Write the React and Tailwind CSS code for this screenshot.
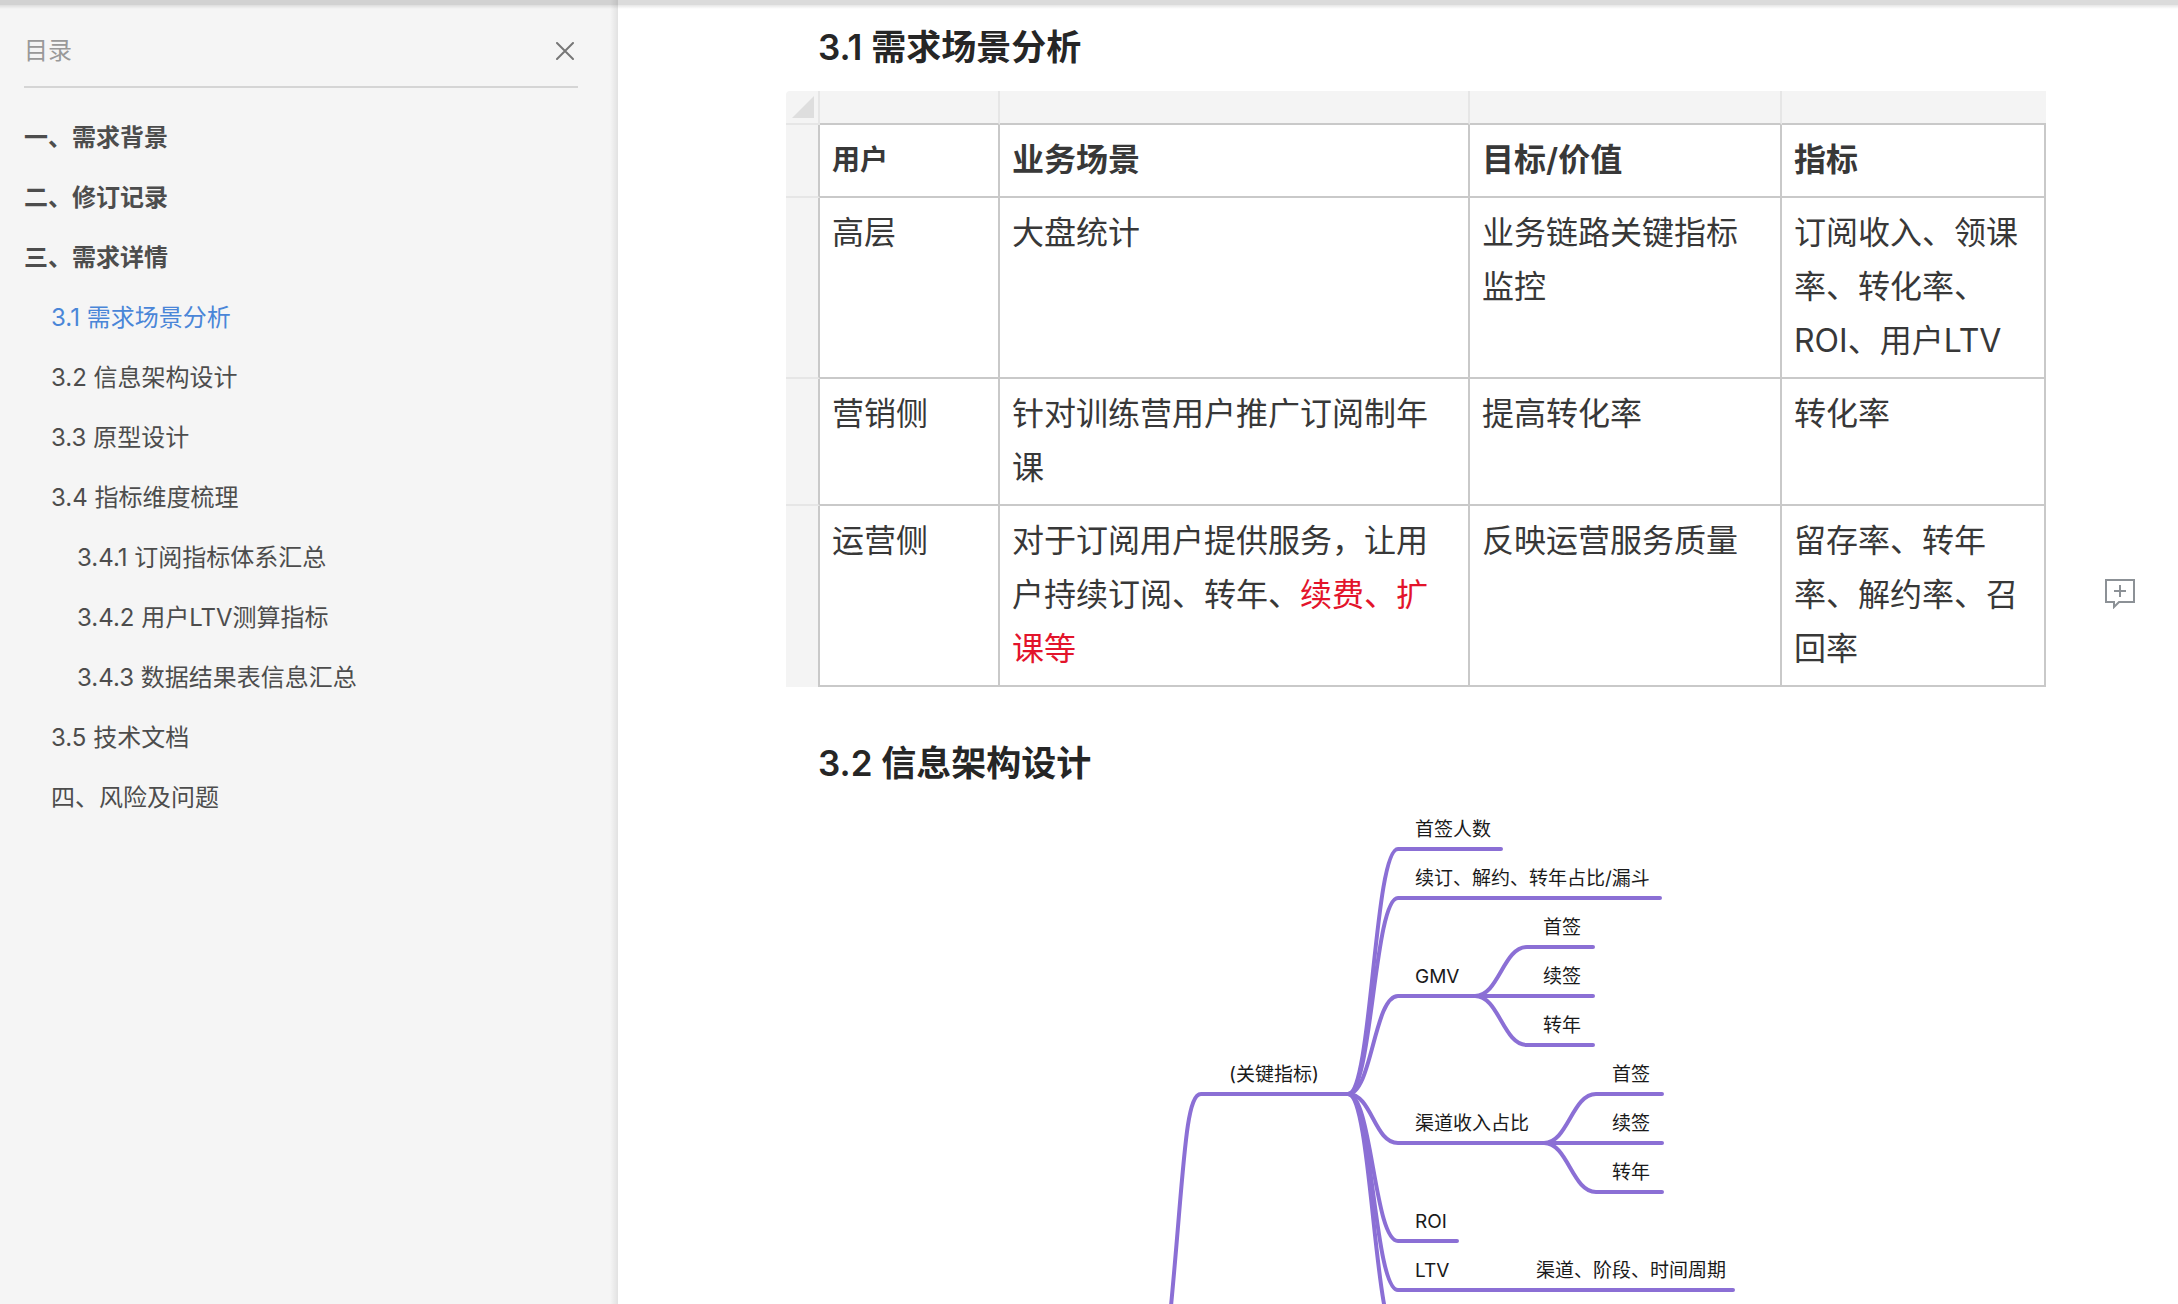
import React from "react";

const outline = [
  { label: "一、需求背景", level: 1 },
  { label: "二、修订记录", level: 1 },
  { label: "三、需求详情", level: 1 },
  { label: "3.1 需求场景分析", level: 2, active: true },
  { label: "3.2 信息架构设计", level: 2 },
  { label: "3.3 原型设计", level: 2 },
  { label: "3.4 指标维度梳理", level: 2 },
  { label: "3.4.1 订阅指标体系汇总", level: 3 },
  { label: "3.4.2 用户LTV测算指标", level: 3 },
  { label: "3.4.3 数据结果表信息汇总", level: 3 },
  { label: "3.5 技术文档", level: 2 },
  { label: "四、风险及问题", level: 2 },
];

const levelClass = {
  1: "font-semibold",
  2: "pl-[27px]",
  3: "pl-[53px]",
};

const rows = [
  ["高层", "大盘统计", "业务链路关键指标监控", "订阅收入、领课率、转化率、ROI、用户LTV"],
  ["营销侧", "针对训练营用户推广订阅制年课", "提高转化率", "转化率"],
  [
    "运营侧",
    <>
      对于订阅用户提供服务，让用户持续订阅、转年、<span className="text-[#e3142b]">续费、扩课等</span>
    </>,
    "反映运营服务质量",
    "留存率、转年率、解约率、召回率",
  ],
];

function Sidebar() {
  return (
    <aside className="flex w-[618px] shrink-0 bg-[#f5f5f5] text-2xl text-[#4d4d4d]">
      <div className="min-w-0 flex-1 pl-6 pr-8 pt-4">
        <header className="flex h-[72px] items-center justify-between border-b-2 border-[#d5d5d5] text-[#999]">
          <h2>目录</h2>
          <button type="button" aria-label="关闭目录" className="p-1 text-[#777]">
            <svg width="18" height="18" viewBox="0 0 18 18" fill="none" stroke="currentColor" strokeWidth="2" strokeLinecap="round">
              <path d="M1 1 17 17M17 1 1 17" />
            </svg>
          </button>
        </header>
        <nav aria-label="目录" className="pt-5">
          <ul>
            {outline.map((item) => (
              <li key={item.label} className={levelClass[item.level]}>
                <a href="#" className={item.active ? "block leading-[60px] text-[#4a86d8]" : "block leading-[60px]"}>
                  {item.label}
                </a>
              </li>
            ))}
          </ul>
        </nav>
      </div>
      <div className="w-2 bg-linear-to-r from-transparent to-black/8" />
    </aside>
  );
}

const cell = "border-b-2 border-r-2 border-[#c9c9c9] px-3 pb-[9px] pt-2 text-left align-top";
const rail = "border-b-2 border-r-2 border-b-[#e6e6e6] border-r-[#c9c9c9] bg-[#f4f4f4] p-0";
const strip = "border-b-2 border-b-[#c9c9c9] bg-[#f4f4f4] p-0";

function ScenarioTable() {
  return (
    <table className="w-full table-fixed border-separate border-spacing-0 text-[32px] leading-[54px] text-[#383838]">
      <colgroup>
        <col className="w-[34px]" />
        <col className="w-[180px]" />
        <col />
        <col className="w-[312px]" />
        <col className="w-[264px]" />
      </colgroup>
      <thead>
        <tr className="h-[34px]">
          <td className="rounded-tl border-b-2 border-r-2 border-[#e6e6e6] bg-[#f4f4f4] p-0">
            <svg className="ml-1.5 block" width="22" height="22" viewBox="0 0 22 22">
              <path d="M22 0V22H0Z" fill="#dedede" />
            </svg>
          </td>
          <td className={`${strip} border-r-2 border-r-[#e6e6e6]`} />
          <td className={`${strip} border-r-2 border-r-[#e6e6e6]`} />
          <td className={`${strip} border-r-2 border-r-[#e6e6e6]`} />
          <td className={strip} />
        </tr>
        <tr>
          <td className={rail} />
          <th scope="col" className={`${cell} text-[28px] font-semibold`}>用户</th>
          <th scope="col" className={`${cell} font-semibold`}>业务场景</th>
          <th scope="col" className={`${cell} font-semibold`}>目标/价值</th>
          <th scope="col" className={`${cell} font-semibold`}>指标</th>
        </tr>
      </thead>
      <tbody>
        {rows.map((r, i) => (
          <tr key={r[0]}>
            <td className={i === rows.length - 1 ? "border-r-2 border-[#c9c9c9] bg-[#f4f4f4] p-0" : rail} />
            {r.map((c, j) => (
              <td key={j} className={cell}>{c}</td>
            ))}
          </tr>
        ))}
      </tbody>
    </table>
  );
}

const branches = [
  { label: "首签人数", y: 62, end: 715 },
  { label: "续订、解约、转年占比/漏斗", y: 111, end: 874 },
  { label: "GMV", y: 209, end: 689, children: ["首签", "续签", "转年"] },
  { label: "渠道收入占比", y: 356, end: 758, children: ["首签", "续签", "转年"] },
  { label: "ROI", y: 454, end: 671 },
  { label: "LTV", y: 503, end: 947, note: { x: 750, label: "渠道、阶段、时间周期" } },
  { label: "", y: 552, end: 700 },
];

const curve = (x1, y1, x2, y2) =>
  `M${x1} ${y1}C${x1 + 24} ${y1} ${x2 - 24} ${y2} ${x2} ${y2}`;

function MindMap() {
  return (
    <svg
      role="img"
      aria-label="信息架构思维导图"
      className="block shrink-0 text-[19px]"
      width="1260"
      height="560"
      viewBox="0 0 1260 560"
    >
      <g fill="none" stroke="#8b6fd5" strokeWidth="4" strokeLinecap="round" strokeLinejoin="round">
        <path d="M385 519C398 383 399 307 415 307H562" />
        {branches.map((b) => (
          <g key={b.y}>
            <path d={`${curve(562, 307, 612, b.y)}H${b.end}`} />
            {b.children &&
              b.children.map((c, i) => (
                <path key={c} d={`${curve(b.end, b.y, b.end + 52, b.y + (i - 1) * 49)}H${b.end + 118}`} />
              ))}
          </g>
        ))}
      </g>
      <g fill="#1a1a1a">
        <text x="443" y="294">(关键指标)</text>
        {branches.map((b) => (
          <React.Fragment key={b.y}>
            {b.label && <text x="629" y={b.y - 13}>{b.label}</text>}
            {b.note && <text x={b.note.x} y={b.y - 13}>{b.note.label}</text>}
            {b.children &&
              b.children.map((c, i) => (
                <text key={c} x={b.end + 68} y={b.y + (i - 1) * 49 - 13}>{c}</text>
              ))}
          </React.Fragment>
        ))}
      </g>
    </svg>
  );
}

const heading = "pl-8 text-[35px] font-semibold leading-[48px] text-[#262626]";

export default function App() {
  return (
    <div className="relative flex h-screen overflow-hidden bg-white font-['Inter','Noto_Sans_CJK_SC',sans-serif]">
      <Sidebar />
      <main className="flex min-w-0 flex-1 pl-[168px]">
        <article className="min-w-0 flex-1">
          <h3 className={`${heading} pb-5 pt-[23px]`}>3.1 需求场景分析</h3>
          <ScenarioTable />
          <h3 className={`${heading} pt-[52px]`}>3.2 信息架构设计</h3>
          <MindMap />
        </article>
        <div className="flex w-[132px] shrink-0 items-start justify-end pr-[43px] pt-[579px]">
          <button type="button" aria-label="添加评论" className="text-[#8c9196]">
            <svg width="30" height="30" viewBox="0 0 30 30" fill="none" stroke="currentColor" strokeWidth="2">
              <path d="M1 1H29V23H14L9 28V23H1Z" />
              <path d="M15 6V18M9 12H21" />
            </svg>
          </button>
        </div>
      </main>
      <div className="pointer-events-none absolute inset-x-0 top-0">
        <div className="h-[5px] bg-black/14" />
        <div className="h-1 bg-linear-to-b from-black/10 to-transparent" />
      </div>
    </div>
  );
}
